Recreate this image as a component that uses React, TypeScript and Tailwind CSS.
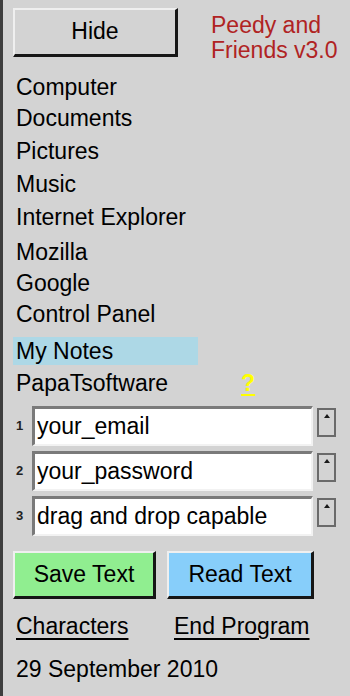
import { useState } from 'react';

const links = [
  { label: 'Computer', cls: 'h-[31px]' },
  { label: 'Documents', cls: 'h-[33px]' },
  { label: 'Pictures', cls: 'h-[33px]' },
  { label: 'Music', cls: 'h-[33px]' },
  { label: 'Internet Explorer', cls: 'h-[35px]' },
  { label: 'Mozilla', cls: 'h-[31px]' },
  { label: 'Google', cls: 'h-[31px]' },
  { label: 'Control Panel', cls: 'h-[36px]' },
];

const raised =
  'border-t-2 border-l-2 border-r-[3px] border-b-[3px] border-t-[#efefef] border-l-[#efefef] border-r-[#161616] border-b-[#161616]';

function Slot({ n, value }: { n: number; value: string }) {
  const [text, setText] = useState(value);
  return (
    <div className="flex items-start mb-[5px]">
      <span className="w-[19px] pl-[3px] pt-[12px] text-[13px] leading-[16px] font-bold text-[#222]">{n}</span>
      <div className="w-[281px] h-[40px] border-t-[3px] border-l-[3px] border-b-2 border-r-2 border-t-[#7a7a7a] border-l-[#7a7a7a] border-b-[#f2f2f2] border-r-[#f2f2f2] bg-white">
        <input
          value={text}
          onChange={(e) => setText(e.target.value)}
          className="w-full h-full pl-[2px] text-[23px] text-black outline-none bg-transparent"
          style={{ fontFamily: '"Liberation Sans", Arial, sans-serif' }}
        />
      </div>
      <button className="ml-[4px] mt-[2px] w-[19px] h-[29px] border-2 border-[#6a6a6a] flex justify-center pt-[4px]">
        <svg width="6" height="4" viewBox="0 0 6 4">
          <path d="M0 4 L3 0 L6 4 Z" fill="#1a1a1a" />
        </svg>
      </button>
    </div>
  );
}

export default function App() {
  const [hidden, setHidden] = useState(false);

  return (
    <div
      className="w-[350px] h-[696px] bg-[#d3d3d3] flex overflow-hidden text-black"
      style={{ fontFamily: '"Liberation Sans", Arial, sans-serif' }}
    >
      <div className="w-[3px] h-full bg-[#3e3e3e]" />

      <div className="flex-1 flex flex-col">
        <div className="flex pt-[8px]">
          <button
            onClick={() => setHidden(!hidden)}
            className={`ml-[10px] w-[165px] h-[49px] bg-[#d3d3d3] text-[23px] leading-[26px] pb-[2px] ${raised}`}
          >
            {hidden ? 'Show' : 'Hide'}
          </button>
          <div className="ml-[33px] mt-[5px] text-[23px] leading-[25px] text-[#b02323]">
            Peedy and
            <br />
            Friends v3.0
          </div>
        </div>

        <div className="mt-[11px] ml-[10px] flex flex-col text-[23px] leading-[26px]">
          {links.map((l) => (
            <div key={l.label} className={`w-[185px] pl-[3px] ${l.cls}`}>
              {l.label}
            </div>
          ))}
          <div className="w-[185px] h-[28px] leading-[28px] pl-[3px] bg-[#add8e6]">My Notes</div>
          <div className="mt-[5px] flex h-[26px]">
            <span className="w-[228px] pl-[3px]">PapaTsoftware</span>
            <span className="font-bold text-[#ffff00] underline decoration-2 underline-offset-[3px]">?</span>
          </div>
        </div>

        <div className="mt-[10px] ml-[10px] flex flex-col">
          <Slot n={1} value="your_email" />
          <Slot n={2} value="your_password" />
          <Slot n={3} value="drag and drop capable" />
        </div>

        <div className="mt-[10px] ml-[10px] flex gap-[11px] text-[23px] leading-[26px]">
          <button className={`w-[143px] h-[48px] bg-[#90ee90] pb-[2px] ${raised} border-t-[#c8f8c8] border-l-[#c8f8c8]`}>
            Save Text
          </button>
          <button className={`w-[147px] h-[48px] bg-[#87cefa] pb-[2px] ${raised} border-t-[#c6e8fc] border-l-[#c6e8fc]`}>
            Read Text
          </button>
        </div>

        <div className="mt-[14px] ml-[13px] flex text-[23px] leading-[26px]">
          <div className="w-[158px]">
            <span className="underline decoration-2 underline-offset-[4px] cursor-pointer">Characters </span>
          </div>
          <span className="underline decoration-2 underline-offset-[4px] cursor-pointer">End Program</span>
        </div>

        <div className="mt-[17px] ml-[13px] text-[23px] leading-[26px]">29 September 2010</div>
      </div>
    </div>
  );
}
